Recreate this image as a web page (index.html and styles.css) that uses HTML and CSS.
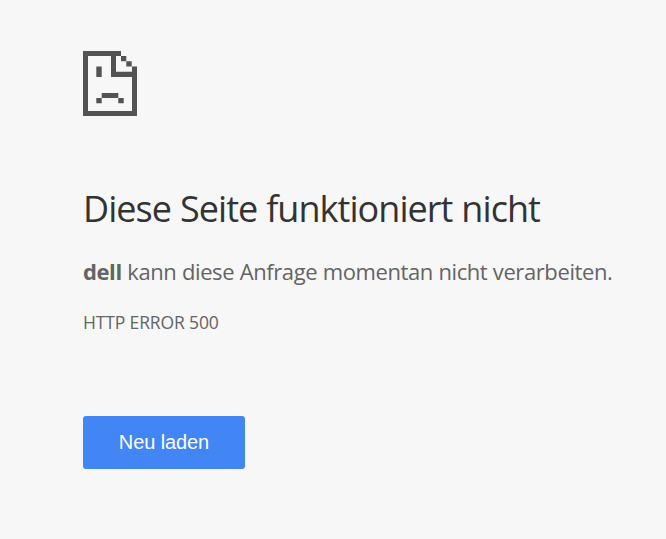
FILE: index.html
```html
<!DOCTYPE html>
<html lang="de">
<head>
<meta charset="utf-8">
<title>dell</title>
<link rel="stylesheet" href="styles.css">
</head>
<body>
<main class="error-page">
<svg class="icon" viewBox="0 0 54 65" aria-hidden="true"><path fill="#535353" fill-rule="evenodd" d="M0 0H38V5H43.3V10.3H48.7V15.6H54V65H0ZM5 5V60H49V26H28V5ZM33 5V20.7H49V15.6H43.3V10.3H38V5ZM13.3 15.6H18.7V26H13.3ZM18.7 42H35.3V47H18.7ZM13.3 47H18.7V52.3H13.3ZM35.3 47H40.7V52.3H35.3Z"/></svg>
<h1 class="title">Diese Seite funktioniert nicht</h1>
<p class="summary"><strong>dell</strong> kann diese Anfrage momentan nicht verarbeiten.</p>
<p class="code">HTTP ERROR 500</p>
<button class="reload">Neu laden</button>
</main>
</body>
</html>
```

FILE: styles.css
```css
body { margin: 0; background: #f7f7f7; color: #646464; font-family: "Open Sans", "Noto Sans", sans-serif; }
.error-page { display: flex; flex-direction: column; align-items: flex-start; padding: 51px 0 0 83px; white-space: nowrap; }
.icon { display: block; width: 54px; height: 65px; }
.title { margin: 69px 0 0; font-size: 36px; line-height: 48px; font-weight: 400; color: #333; letter-spacing: -0.95px; word-spacing: 0.5px; }
.summary { margin: 23px 0 0; font-size: 22px; line-height: 30px; letter-spacing: -0.4px; word-spacing: 0.2px; }
.code { margin: 24px 0 0; font-size: 17.5px; line-height: 24px; letter-spacing: -0.13px; }
.reload { margin: 82px 0 0; width: 162px; height: 53px; padding: 0; border: 0; border-radius: 3px; background: #4285f4; color: #fff; font: 20px "Liberation Sans", sans-serif; letter-spacing: -0.1px; }
```
